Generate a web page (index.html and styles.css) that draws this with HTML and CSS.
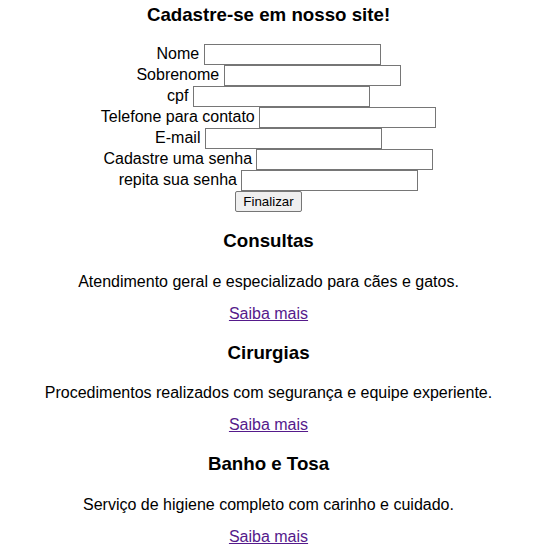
FILE: index.html
```html
<!DOCTYPE html>
<html lang="pt-BR">
<head>
<meta charset="utf-8">
<title>Cadastro</title>
<link rel="stylesheet" href="styles.css">
</head>
<body>
<h3 class="title">Cadastre-se em nosso site!</h3>
<form class="form">
  <label class="row">Nome <input class="field" type="text"></label>
  <label class="row">Sobrenome <input class="field" type="text"></label>
  <label class="row">cpf <input class="field" type="text"></label>
  <label class="row">Telefone para contato <input class="field" type="text"></label>
  <label class="row">E-mail <input class="field" type="text"></label>
  <label class="row">Cadastre uma senha <input class="field" type="password"></label>
  <label class="row">repita sua senha <input class="field" type="password"></label>
  <div class="row"><button class="btn" type="button">Finalizar</button></div>
</form>
<section class="service">
  <h3 class="service-title">Consultas</h3>
  <p class="service-text">Atendimento geral e especializado para cães e gatos.</p>
  <a class="more" href="#">Saiba mais</a>
</section>
<section class="service">
  <h3 class="service-title">Cirurgias</h3>
  <p class="service-text">Procedimentos realizados com segurança e equipe experiente.</p>
  <a class="more" href="#">Saiba mais</a>
</section>
<section class="service">
  <h3 class="service-title">Banho e Tosa</h3>
  <p class="service-text">Serviço de higiene completo com carinho e cuidado.</p>
  <a class="more" href="#">Saiba mais</a>
</section>
</body>
</html>
```
FILE: styles.css
```css
html, body {
  background: #fff;
}
body {
  margin: 0;
  padding: 0 7px 0 9px;
  font-family: "Liberation Sans", Arial, sans-serif;
  font-size: 16px;
  color: #000;
  text-align: center;
}
.title {
  font-size: 18.72px;
  font-weight: bold;
  line-height: 21.5px;
  margin: 3.5px 0 18.5px;
}
.form {
  display: flex;
  flex-direction: column;
  align-items: center;
  margin: 0;
}
.row {
  display: flex;
  align-items: center;
  justify-content: center;
  height: 21px;
  white-space: pre;
  line-height: 18px;
}
.field {
  box-sizing: border-box;
  width: 177px;
  height: 21px;
  margin: 0;
  padding: 1px 2px;
  border: 1px solid #767676;
  border-radius: 0;
  background: #fff;
  font: 13.33px "Liberation Sans", Arial, sans-serif;
}
.btn {
  box-sizing: border-box;
  height: 21px;
  width: 67px;
  margin: 0;
  padding: 1px 6px;
  border: 1px solid #767676;
  border-radius: 2px;
  background: #efefef;
  color: #000;
  font: 13.33px "Liberation Sans", Arial, sans-serif;
}
.service {
  display: flex;
  flex-direction: column;
  align-items: center;
}
.service-title {
  font-size: 18.72px;
  font-weight: bold;
  line-height: 21.5px;
  margin: 18.72px 0 21px;
}
.service-text {
  margin: 0 0 13.6px;
  line-height: 18.4px;
}
.more {
  color: #551a8b;
  text-decoration: underline;
  line-height: 18.4px;
}
```
